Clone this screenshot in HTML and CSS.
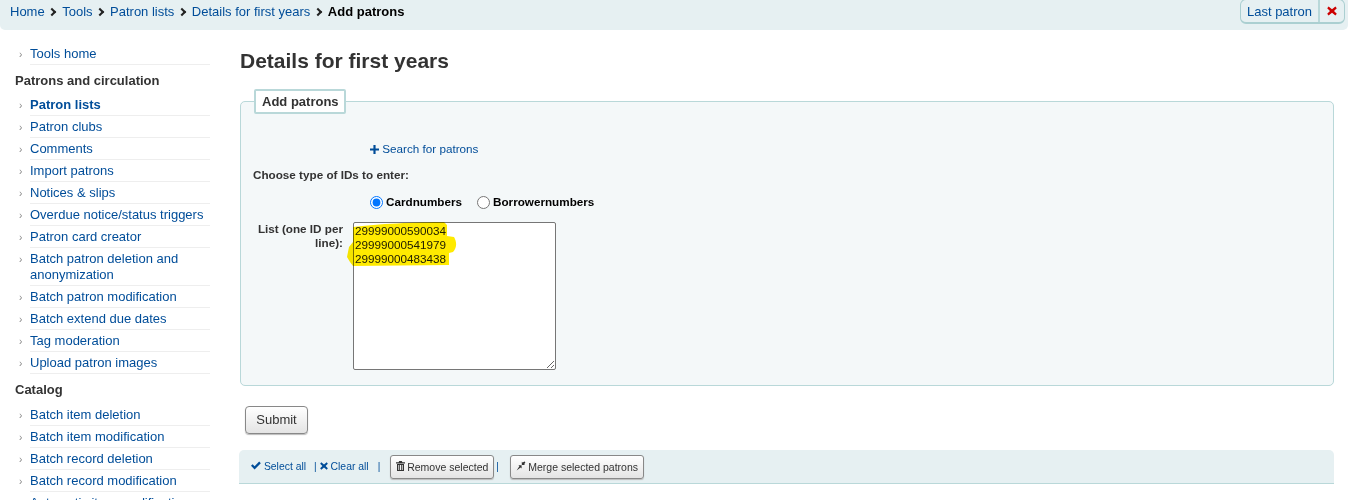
FILE: index.html
```html
<!DOCTYPE html>
<html lang="en">
<head>
<meta charset="utf-8">
<title>Add patrons</title>
<link rel="stylesheet" href="styles.css">
</head>
<body>
<div class="topbar">
  <nav class="crumbs">
    <a href="#">Home</a><span class="sep"></span><a href="#">Tools</a><span class="sep"></span><a href="#">Patron lists</a><span class="sep"></span><a href="#">Details for first years</a><span class="sep"></span><strong>Add patrons</strong>
  </nav>
  <div class="lastpatron">
    <a href="#" class="lp-link">Last patron</a>
    <a href="#" class="lp-x"><svg width="10" height="10" viewBox="0 0 10 10"><path d="M1.6 0.4 5 3.2 8.4 0.4 9.8 2.3 7 5 9.8 7.7 8.4 9.6 5 6.8 1.6 9.6 0.2 7.7 3 5 0.2 2.3Z" fill="#c00"/></svg></a>
  </div>
</div>
<div class="main">
  <aside class="side">
    <ul class="menu first">
      <li><a href="#">Tools home</a></li>
    </ul>
    <h5>Patrons and circulation</h5>
    <ul class="menu">
      <li class="active"><a href="#">Patron lists</a></li>
      <li><a href="#">Patron clubs</a></li>
      <li><a href="#">Comments</a></li>
      <li><a href="#">Import patrons</a></li>
      <li><a href="#">Notices &amp; slips</a></li>
      <li><a href="#">Overdue notice/status triggers</a></li>
      <li><a href="#">Patron card creator</a></li>
      <li><a href="#">Batch patron deletion and anonymization</a></li>
      <li><a href="#">Batch patron modification</a></li>
      <li><a href="#">Batch extend due dates</a></li>
      <li><a href="#">Tag moderation</a></li>
      <li><a href="#">Upload patron images</a></li>
    </ul>
    <h5>Catalog</h5>
    <ul class="menu catalog">
      <li><a href="#">Batch item deletion</a></li>
      <li><a href="#">Batch item modification</a></li>
      <li><a href="#">Batch record deletion</a></li>
      <li><a href="#">Batch record modification</a></li>
      <li><a href="#">Automatic item modification</a></li>
    </ul>
  </aside>
  <main class="content">
    <h1>Details for first years</h1>
    <fieldset class="box">
      <legend>Add patrons</legend>
      <div class="search"><a href="#"><svg class="plus" width="9" height="9" viewBox="0 0 10 10"><path d="M3.8 0H6.2V3.8H10V6.2H6.2V10H3.8V6.2H0V3.8H3.8Z" fill="#004d99"/></svg> Search for patrons</a></div>
      <div class="choose">Choose type of IDs to enter:</div>
      <div class="radios">
        <label><input type="radio" name="idtype" checked>Cardnumbers</label>
        <label><input type="radio" name="idtype">Borrowernumbers</label>
      </div>
      <div class="listrow">
        <label class="listlabel" for="ids">List (one ID per line):</label>
        <div class="areawrap">
          <svg class="marker" width="120" height="50" viewBox="0 0 120 50"><path d="M6 5 C30 2 70 0 97 0 L100 3 L100 14 L107 15 C110 20 110 26 106 30 L102 31 L102 43 L6 44 L3 40 L0 35 L2 25 L6 20Z" fill="#ffea00"/></svg>
          <textarea id="ids" class="ids" spellcheck="false">29999000590034
29999000541979
29999000483438</textarea>
        </div>
      </div>
    </fieldset>
    <button class="btn submit" type="button">Submit</button>
    <div class="toolbar">
      <a href="#" class="tl"><svg width="10" height="9" viewBox="0 0 10 9"><path d="M0 4.8 1.6 3.2 3.6 5.2 8.2 0.6 9.8 2.2 3.6 8.4Z" fill="#004d99"/></svg> Select all</a>
      <span class="bar bar1">|</span>
      <a href="#" class="tl"><svg width="8" height="8" viewBox="0 0 10 10"><path d="M1.6 0.4 5 3.2 8.4 0.4 9.8 2.3 7 5 9.8 7.7 8.4 9.6 5 6.8 1.6 9.6 0.2 7.7 3 5 0.2 2.3Z" fill="#004d99"/></svg> Clear all</a>
      <span class="bar bar2">|</span>
      <button class="btn small" type="button"><svg class="bicon" width="9" height="10" viewBox="0 0 9 10"><path d="M0 1.2H2.6L3.2 0H5.8L6.4 1.2H9V2.4H0ZM1 3H8V10H1ZM2.3 4V9H3.2V4ZM4 4V9H5V4ZM5.8 4V9H6.7V4Z" fill="#333" fill-rule="evenodd"/></svg> Remove selected</button>
      <span class="bar bar3">|</span>
      <button class="btn small" type="button"><svg class="bicon" width="10" height="10" viewBox="0 0 10 10"><path d="M0.6 9.6 3.4 5.2 2.4 4.2 5.6 4.2 5.6 7.4 4.6 6.4ZM5.8 0.8 6.6 1.6 8.6 0.4 9.4 1.2 8.2 3.2 9 4 6 4 5.8 4Z" fill="#333"/></svg> Merge selected patrons</button>
    </div>
  </main>
</div>
</body>
</html>
```
FILE: styles.css
```css
* { box-sizing: border-box; }
html, body { margin: 0; padding: 0; height: 500px; overflow: hidden; background: #fff; }
body { font-family: "Liberation Sans", Arial, sans-serif; font-size: 13px; color: #333; }
a { color: #004d99; text-decoration: none; }

.topbar { height: 30px; background: #e6f0f2; border-radius: 0 0 5px 5px; display: flex; justify-content: space-between; padding: 0 3px 0 10px; }
.crumbs { font-size: 13px; line-height: 23px; white-space: nowrap; }
.crumbs strong { color: #000; }
.crumbs .sep { display: inline-block; width: 6px; height: 6px; margin: 0 7px 1px 4.5px; border-top: 2px solid #222; border-right: 2px solid #222; transform: rotate(45deg); }

.lastpatron { display: flex; height: 25px; margin-top: -1px; border: 1px solid #abcfd1; border-bottom-width: 2px; border-radius: 6px; background: #e6f0f2; font-size: 13px; line-height: 23px; }
.lp-link { padding: 0 6px; border-right: 2px solid #b9d8d9; }
.lp-x { width: 24px; display: flex; align-items: center; justify-content: center; }

.main { display: flex; }
.side { width: 240px; flex: none; padding: 13px 0 0 15px; }
.side h5 { margin: 0; font-size: 13px; font-weight: 700; line-height: 16px; padding: 8px 0 5px; }
.menu { list-style: none; margin: 0; padding: 0; width: 195px; }
.catalog { padding-top: 1px; }
.menu li { margin-left: 15px; padding: 3px 0 2px; border-bottom: 1px solid #eee; line-height: 16px; position: relative; }
.menu li::before { content: "›"; position: absolute; left: -11px; top: 4px; font-size: 10px; color: #888; }
.menu .active a { font-weight: 700; }

.content { flex: 1; padding-right: 14px; }
h1 { margin: 0; font-size: 21px; line-height: 24px; font-weight: 700; padding-top: 19px; color: #333; }
.box { margin: 16px 0 0; padding: 0 12px; height: 297px; border: 1px solid #b9d8d9; border-radius: 5px; background: #f4f8f9; min-width: 0; }
.box legend { margin-left: 1px; padding: 0 5px 0 6px; height: 25px; line-height: 21px; border: 2px solid #b9d8d9; background: #fff; font-size: 13px; font-weight: 700; color: #333; border-radius: 2px; }
.search { font-size: 11.7px; padding: 27px 0 0 117px; line-height: 16px; }
.plus { vertical-align: -1px; }
.choose { font-size: 11.7px; font-weight: 700; line-height: 16px; margin-top: 10px; }
.radios { display: flex; margin: 11px 0 0 117px; font-size: 11.7px; font-weight: 700; line-height: 16px; }
.radios label { display: flex; align-items: center; margin-right: 15px; color: #000; }
.radios input { margin: 0 3px 0 0; width: 13px; height: 13px; }
.listrow { display: flex; margin-top: 12px; }
.listlabel { width: 90px; text-align: right; font-size: 11.7px; font-weight: 700; line-height: 14px; margin-right: 10px; }
.areawrap { position: relative; width: 203px; height: 148px; }
.ids { display: block; width: 203px; height: 148px; padding: 1px; margin: 0; border: 1px solid #767676; border-radius: 2px; background: #fff; font: 11.7px/14px "Liberation Sans", Arial, sans-serif; color: #222; }
.marker { position: absolute; left: -6px; top: 0; mix-blend-mode: multiply; z-index: 1; pointer-events: none; }

.btn { font-family: inherit; color: #333; border: 1px solid #888; border-radius: 4px; background: linear-gradient(#fff, #e4e4e4); box-shadow: 0 1px 1px #bbb; cursor: pointer; }
.submit { display: block; margin: 20px 0 0 5px; width: 63px; height: 28px; font-size: 13px; padding: 0 0 2px; }
.toolbar { display: flex; align-items: center; margin: 16px 0 0 -1px; height: 34px; background: #e6f0f2; border: 0 solid #b9d8d9; border-bottom-width: 1px; border-radius: 5px 5px 0 0; padding-left: 12px; font-size: 10.4px; }
.tl { white-space: nowrap; }
.bar { color: #004d99; font-size: 10px; }
.bar1 { margin: 0 3px 0 8px; }
.bar2 { margin: 0 10px 0 9px; }
.bar3 { margin: 0 11.4px 0 2px; }
.small { height: 24px; padding: 0 5px; font-size: 10.5px; white-space: nowrap; border-radius: 3px; }
.bicon { margin-right: -1px; }
```
